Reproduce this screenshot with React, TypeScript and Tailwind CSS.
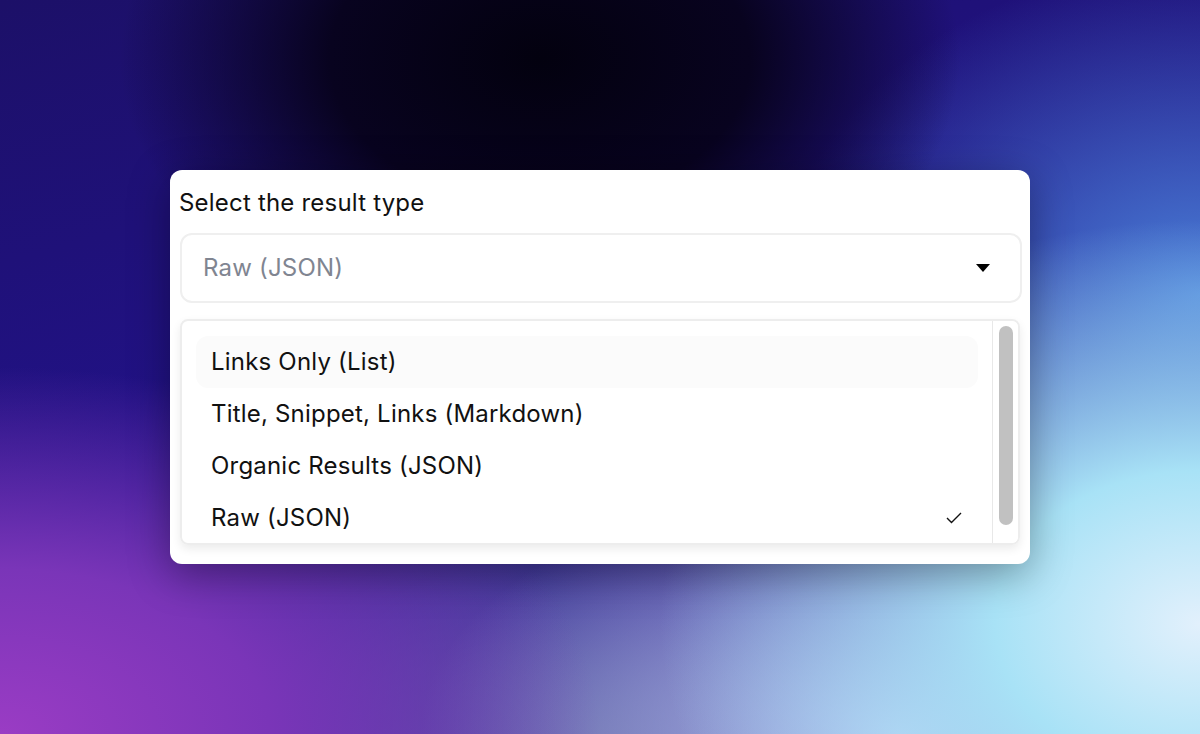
const options = [
  "Links Only (List)",
  "Title, Snippet, Links (Markdown)",
  "Organic Results (JSON)",
  "Raw (JSON)",
];

export default function App() {
  const selected = "Raw (JSON)";
  return (
    <div
      className="w-[1200px] h-[734px] flex items-center justify-center font-['Inter',sans-serif] bg-[radial-gradient(ellipse_35%_40%_at_45%_8%,#03010f_0%,#08031f_50%,transparent_100%),radial-gradient(ellipse_45%_55%_at_100%_85%,#e2f0fc_0%,#a8e2f6_38%,transparent_100%),radial-gradient(ellipse_35%_45%_at_100%_40%,#4a80d8_0%,transparent_100%),radial-gradient(ellipse_50%_50%_at_0%_100%,#9a3cc4_0%,#7a35b8_45%,transparent_100%),radial-gradient(ellipse_40%_35%_at_75%_100%,#b4c2ee_0%,transparent_100%),radial-gradient(ellipse_40%_40%_at_50%_100%,#5a5aa0_0%,transparent_100%),linear-gradient(165deg,#1c1068_0%,#22128a_50%,#4a3bb0_100%)]"
    >
      {/* Card */}
      <div className="w-[860px] bg-white rounded-xl pl-[10px] pr-[8px] pt-[19px] pb-[19px] shadow-[0_10px_40px_rgba(0,0,0,0.35)]">
        <div className="text-[24px] leading-7 tracking-[0.2px] text-[#111] mb-[16px] -ml-px">
          Select the result type
        </div>

        {/* Select trigger */}
        <div className="h-[70px] rounded-xl border-2 border-[#efefef] flex items-center pl-[21px] pr-[29px]">
          <span className="flex-1 text-[24px] tracking-[0.2px] text-[#808591]">{selected}</span>
          <svg width="16" height="10" viewBox="0 0 16 10">
            <path d="M1 1 L15 1 L8 9 Z" fill="#000" />
          </svg>
        </div>

        {/* Options list */}
        <div className="mt-[16px] mr-[2px] h-[226px] rounded-lg border-2 border-[#ededed] flex overflow-hidden shadow-[0_4px_10px_rgba(0,0,0,0.08)]">
          <div className="flex-1 pl-[14px] pr-[14px] pt-[15px] flex flex-col">
            {options.map((o, i) => (
              <div
                key={o}
                className={
                  "h-[52px] shrink-0 rounded-xl flex items-center pl-[15px] pr-[16px] text-[24px] tracking-[0.2px] text-[#111] " +
                  (i === 0 ? "bg-[#fbfbfb]" : "")
                }
              >
                <span className="flex-1">{o}</span>
                {o === selected && (
                  <svg width="16" height="12" viewBox="0 0 16 12">
                    <path d="M1 6 L5.5 10.5 L15 1" fill="none" stroke="#111" strokeWidth="1.4" />
                  </svg>
                )}
              </div>
            ))}
          </div>
          <div className="w-[26px] border-l border-[#e8e8e8] bg-white flex justify-center pt-[5px]">
            <div className="w-[14px] h-[199px] rounded-full bg-[#c1c1c1]" />
          </div>
        </div>
      </div>
    </div>
  );
}
